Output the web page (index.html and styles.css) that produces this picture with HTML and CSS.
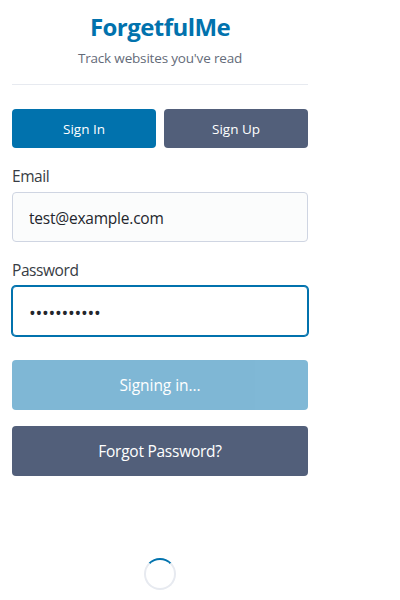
FILE: index.html
```html
<!DOCTYPE html>
<html lang="en">
<head>
<meta charset="utf-8">
<title>ForgetfulMe</title>
<link rel="stylesheet" href="styles.css">
</head>
<body>
<main class="popup">
  <header class="header">
    <h1>ForgetfulMe</h1>
    <p>Track websites you've read</p>
  </header>
  <nav class="tabs">
    <button class="button primary">Sign In</button>
    <button class="button secondary">Sign Up</button>
  </nav>
  <form class="form">
    <label for="email">Email</label>
    <input id="email" class="input" type="text" value="test@example.com">
    <label for="password">Password</label>
    <div class="input focused" id="password">•••••••••••</div>
    <button type="button" class="button primary large busy">Signing in...</button>
    <button type="button" class="button secondary large forgot">Forgot Password?</button>
  </form>
  <div class="spinner"></div>
</main>
</body>
</html>
```
FILE: styles.css
```css
* { box-sizing: border-box; }
body {
  margin: 0;
  height: 600px;
  overflow: hidden;
  background: #fff;
  color: #373c44;
  font-family: "Segoe UI", "Open Sans", "Noto Sans", sans-serif;
}
.popup { width: 320px; padding: 12px; }
.header {
  height: 73px;
  border-bottom: 1px solid #e7eaf0;
  text-align: center;
}
h1, p { margin: 0; }
h1 { height: 30px; color: #0172ad; font-size: 24px; line-height: 29px; font-weight: 700; letter-spacing: -.55px; }
p { margin-top: 6px; color: #646b79; font-size: 13.5px; line-height: 21px; letter-spacing: -.18px; }
.tabs { display: grid; grid-template-columns: 1fr 1fr; gap: 8px; margin-top: 24px; }
.button {
  height: 39px;
  padding: 1px 0 0;
  border: 0;
  border-radius: 4px;
  color: #fff;
  font: 13.5px "Segoe UI", "Open Sans", sans-serif;
}
.primary { background: #0172ad; }
.secondary { background: #525f7a; }
.form { display: flex; flex-direction: column; margin-top: 16px; }
label { height: 24px; margin-bottom: 4px; font-size: 15.5px; line-height: 25px; letter-spacing: -.42px; }
.input {
  height: 50px;
  margin: 0 0 16px;
  padding: 2px 16px 0;
  border: 1px solid #cfd5e2;
  border-radius: 4px;
  background: #fbfcfc;
  color: #23262c;
  font: 15.5px/48px "Segoe UI", "Open Sans", sans-serif;
  letter-spacing: -.22px;
}
.focused {
  margin-bottom: 24px;
  border-color: #0172ad;
  box-shadow: 0 0 0 1px #0172ad;
  background: #fff;
  font-size: 18px;
  letter-spacing: -.28px;
}
.large { height: 50px; padding: 0; font-size: 15.5px; letter-spacing: -.05px; }
.busy { margin-bottom: 16px; opacity: .5; }
.forgot { letter-spacing: -.25px; }
.spinner {
  width: 32px;
  height: 32px;
  margin: 82px auto 0;
  border: 2px solid #e7eaf0;
  border-top-color: #0172ad;
  border-radius: 50%;
}
```
